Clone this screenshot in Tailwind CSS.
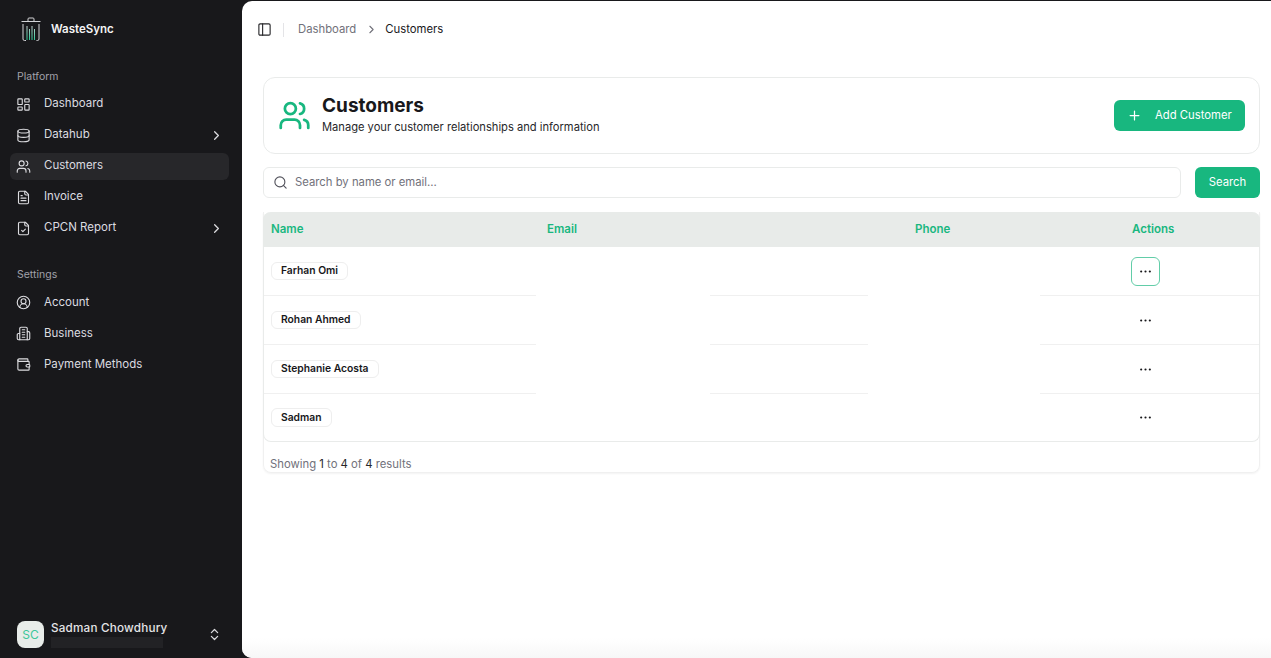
<!DOCTYPE html>
<html lang="en">
<head>
  <meta charset="UTF-8" />
  <meta name="viewport" content="width=device-width, initial-scale=1" />
  <title>WasteSync Customers</title>
  <script src="https://cdn.jsdelivr.net/npm/@tailwindcss/browser@4"></script>
</head>
<body class="bg-[#18181b] font-['Inter',sans-serif] h-[658px] w-[1271px] overflow-hidden flex">
  <!-- sidebar -->
  <aside class="w-[242px] h-full shrink-0 flex flex-col text-[#dcdce0] text-[11.5px]">
    <div class="h-[58px] pl-[21px] flex items-center gap-[10px]">
      <svg class="w-[20px] h-[25px]" viewBox="0 0 20 25" fill="none" stroke="#d4d4d8" stroke-width="1">
        <defs>
          <linearGradient id="bar" gradientUnits="userSpaceOnUse" x1="0" y1="8" x2="0" y2="24">
            <stop offset="0" stop-color="#d4d4d8" />
            <stop offset="1" stop-color="#22c58f" />
          </linearGradient>
        </defs>
        <path d="M0.5 4.500h19M7 4.500V2a1 1 0 0 1 1-1h4a1 1 0 0 1 1 1v2.500" />
        <path d="M2 7v15a1.500 1.500 0 0 0 1.500 1.500h1.500" />
        <path d="M18 7v15a1.500 1.500 0 0 1-1.500 1.500h-1" />
        <path d="M6 9v14M8.500 12v11M11 9v14M13.500 12v11" stroke="url(#bar)" stroke-width="1" />
      </svg>
      <span class="font-semibold text-[#f4f4f5] mt-px">WasteSync</span>
    </div>
    <div class="mt-[12px] pl-[17px] text-[10.500px] leading-[14px] text-[#a1a1aa]">Platform</div>
    <nav class="mt-[6.500px] ml-[10px] mr-[13px] flex flex-col gap-[4px]">
      <a class="h-[27px] pl-[6px] pr-[5px] flex items-center gap-[13px] rounded-md">
        <svg class="w-[15px] h-[15px] shrink-0" viewBox="0 0 24 24" fill="none" stroke="currentColor" stroke-width="1.800" stroke-linecap="round" stroke-linejoin="round"><rect width="7" height="9" x="3" y="3" rx="1"/><rect width="7" height="5" x="14" y="3" rx="1"/><rect width="7" height="9" x="14" y="12" rx="1"/><rect width="7" height="5" x="3" y="16" rx="1"/></svg>
        <span>Dashboard</span>
      </a>
      <a class="h-[27px] pl-[6px] pr-[5px] flex items-center gap-[13px] rounded-md">
        <svg class="w-[15px] h-[15px] shrink-0" viewBox="0 0 24 24" fill="none" stroke="currentColor" stroke-width="1.800" stroke-linecap="round" stroke-linejoin="round"><ellipse cx="12" cy="5" rx="9" ry="3"/><path d="M3 5v14a9 3 0 0 0 18 0V5"/><path d="M3 12a9 3 0 0 0 18 0"/></svg>
        <span>Datahub</span>
        <svg class="w-[15px] h-[15px] ml-auto" viewBox="0 0 24 24" fill="none" stroke="currentColor" stroke-width="2" stroke-linecap="round" stroke-linejoin="round"><path d="m9 18 6-6-6-6"/></svg>
      </a>
      <a class="h-[27px] pl-[6px] pr-[5px] flex items-center gap-[13px] rounded-md bg-[#27272a]">
        <svg class="w-[15px] h-[15px] shrink-0" viewBox="0 0 24 24" fill="none" stroke="currentColor" stroke-width="1.800" stroke-linecap="round" stroke-linejoin="round"><path d="M16 21v-2a4 4 0 0 0-4-4H6a4 4 0 0 0-4 4v2"/><circle cx="9" cy="7" r="4"/><path d="M22 21v-2a4 4 0 0 0-3-3.870"/><path d="M16 3.130a4 4 0 0 1 0 7.750"/></svg>
        <span>Customers</span>
      </a>
      <a class="h-[27px] pl-[6px] pr-[5px] flex items-center gap-[13px] rounded-md">
        <svg class="w-[15px] h-[15px] shrink-0" viewBox="0 0 24 24" fill="none" stroke="currentColor" stroke-width="1.800" stroke-linecap="round" stroke-linejoin="round"><path d="M15 2H6a2 2 0 0 0-2 2v16a2 2 0 0 0 2 2h12a2 2 0 0 0 2-2V7Z"/><path d="M14 2v4a2 2 0 0 0 2 2h4"/><path d="M10 9H8M16 13H8M16 17H8"/></svg>
        <span>Invoice</span>
      </a>
      <a class="h-[27px] pl-[6px] pr-[5px] flex items-center gap-[13px] rounded-md">
        <svg class="w-[15px] h-[15px] shrink-0" viewBox="0 0 24 24" fill="none" stroke="currentColor" stroke-width="1.800" stroke-linecap="round" stroke-linejoin="round"><path d="M15 2H6a2 2 0 0 0-2 2v16a2 2 0 0 0 2 2h12a2 2 0 0 0 2-2V7Z"/><path d="M14 2v4a2 2 0 0 0 2 2h4"/><path d="m9 15 2 2 4-4"/></svg>
        <span>CPCN Report</span>
        <svg class="w-[15px] h-[15px] ml-auto" viewBox="0 0 24 24" fill="none" stroke="currentColor" stroke-width="2" stroke-linecap="round" stroke-linejoin="round"><path d="m9 18 6-6-6-6"/></svg>
      </a>
    </nav>
    <div class="mt-[26.500px] pl-[17px] text-[10.500px] leading-[14px] text-[#a1a1aa]">Settings</div>
    <nav class="mt-[7px] ml-[10px] mr-[13px] flex flex-col gap-[4px]">
      <a class="h-[27px] pl-[6px] pr-[5px] flex items-center gap-[13px]">
        <svg class="w-[15px] h-[15px] shrink-0" viewBox="0 0 24 24" fill="none" stroke="currentColor" stroke-width="1.800" stroke-linecap="round" stroke-linejoin="round"><circle cx="12" cy="12" r="10"/><circle cx="12" cy="10" r="4"/><path d="M18 20a6 6 0 0 0-12 0"/></svg>
        <span>Account</span>
      </a>
      <a class="h-[27px] pl-[6px] pr-[5px] flex items-center gap-[13px]">
        <svg class="w-[15px] h-[15px] shrink-0" viewBox="0 0 24 24" fill="none" stroke="currentColor" stroke-width="1.800" stroke-linecap="round" stroke-linejoin="round"><path d="M6 22V4a2 2 0 0 1 2-2h8a2 2 0 0 1 2 2v18Z"/><path d="M6 12H4a2 2 0 0 0-2 2v6a2 2 0 0 0 2 2h2"/><path d="M18 9h2a2 2 0 0 1 2 2v9a2 2 0 0 1-2 2h-2"/><path d="M10 6h4M10 10h4M10 14h4M10 18h4"/></svg>
        <span>Business</span>
      </a>
      <a class="h-[27px] pl-[6px] pr-[5px] flex items-center gap-[13px]">
        <svg class="w-[15px] h-[15px] shrink-0" viewBox="0 0 24 24" fill="none" stroke="currentColor" stroke-width="1.800" stroke-linecap="round" stroke-linejoin="round"><path d="M19 7V4a1 1 0 0 0-1-1H5a2 2 0 0 0 0 4h15a1 1 0 0 1 1 1v4h-3a2 2 0 0 0 0 4h3a1 1 0 0 0 1-1v-2a1 1 0 0 0-1-1"/><path d="M3 5v14a2 2 0 0 0 2 2h15a1 1 0 0 0 1-1v-4"/></svg>
        <span>Payment Methods</span>
      </a>
    </nav>
    <div class="mt-auto mb-[10px] pl-[17px] pr-[20px] flex items-center">
      <div class="w-[27px] h-[27px] rounded-lg bg-[#e8ece9] text-[#3cc79a] text-[12px] flex items-center justify-center">SC</div>
      <div class="ml-[7px] h-[27px]">
        <div class="font-medium text-[11.700px] leading-[16px] tracking-[0.2px] text-[#e4e4e7] -mt-[1px]">Sadman Chowdhury</div>
        <div class="w-[112px] h-[11px] mt-[1px] bg-[#222225]"></div>
      </div>
      <svg class="w-[15px] h-[15px] ml-auto" viewBox="0 0 24 24" fill="none" stroke="currentColor" stroke-width="2" stroke-linecap="round" stroke-linejoin="round"><path d="m7 15 5 5 5-5"/><path d="m7 9 5-5 5 5"/></svg>
    </div>
  </aside>

  <!-- main -->
  <main class="relative flex-1 h-[657px] mt-[1px] bg-white rounded-l-[10px] overflow-hidden text-[#18181b]">
    <header class="h-[55px] pl-[15px] pt-[2px] flex items-center text-[11.300px]">
      <svg class="w-[15px] h-[15px]" viewBox="0 0 24 24" fill="none" stroke="#27272a" stroke-width="1.800" stroke-linecap="round" stroke-linejoin="round"><rect width="18" height="18" x="3" y="3" rx="2"/><path d="M9 3v18"/></svg>
      <div class="w-px h-[14px] bg-[#e4e4e7] ml-[11px] mr-[14px]"></div>
      <span class="text-[#71717a]">Dashboard</span>
      <svg class="w-[13px] h-[13px] ml-[9px] mr-[7px] text-[#71717a]" viewBox="0 0 24 24" fill="none" stroke="currentColor" stroke-width="2" stroke-linecap="round" stroke-linejoin="round"><path d="m9 18 6-6-6-6"/></svg>
      <span>Customers</span>
    </header>
    <div class="pl-[21px] pr-[11px] pt-[21px]">
      <section class="h-[77px] border border-[#e9ebea] rounded-xl pl-[14px] pr-[14px] flex items-center">
        <svg class="w-[33px] h-[33px] text-[#18b77f] shrink-0" viewBox="0 0 24 24" fill="none" stroke="currentColor" stroke-width="2" stroke-linecap="round" stroke-linejoin="round"><path d="M16 21v-2a4 4 0 0 0-4-4H6a4 4 0 0 0-4 4v2"/><circle cx="9" cy="7" r="4"/><path d="M22 21v-2a4 4 0 0 0-3-3.870"/><path d="M16 3.130a4 4 0 0 1 0 7.750"/></svg>
        <div class="ml-[11px] -mt-[2px]">
          <h1 class="text-[19px] leading-[25px] font-bold">Customers</h1>
          <p class="text-[11.150px] leading-[18px] text-[#27272a]">Manage your customer relationships and information</p>
        </div>
        <button class="ml-auto w-[131px] h-[31px] rounded-md bg-[#18b77f] text-white text-[11.300px] flex items-center pl-[13px]">
          <svg class="w-[15px] h-[15px]" viewBox="0 0 24 24" fill="none" stroke="currentColor" stroke-width="2" stroke-linecap="round" stroke-linejoin="round"><path d="M5 12h14M12 5v14"/></svg>
          <span class="ml-[13px]">Add Customer</span>
        </button>
      </section>
      <div class="mt-[13px] flex gap-[14px]">
        <div class="flex-1 h-[31px] border border-[#e9ebea] rounded-md pl-[9px] flex items-center text-[11.300px] text-[#71717a]">
          <svg class="w-[15px] h-[15px] text-[#52525b]" viewBox="0 0 24 24" fill="none" stroke="currentColor" stroke-width="1.800" stroke-linecap="round" stroke-linejoin="round"><path d="m21 21-4.340-4.340"/><circle cx="11" cy="11" r="8"/></svg>
          <span class="ml-[7px]">Search by name or email...</span>
        </div>
        <button class="w-[65px] h-[31px] rounded-md bg-[#18b77f] text-white text-[11.300px]">Search</button>
      </div>
      <div class="mt-[14px] border-x border-b border-[#f0f0f0] rounded-b-lg shadow-[0_1px_2px_rgba(0,0,0,0.05)] h-[261px]">
        <div class="h-[230px] border-x border-b border-[#e9ebea] -mx-px rounded-lg">
          <div class="h-[35px] -mx-px rounded-t-lg bg-[#e8ebe9] flex items-center text-[11.500px] font-semibold text-[#18b77f]">
            <div class="w-[284px] pl-[8px]">Name</div>
            <div class="w-[368px]">Email</div>
            <div class="w-[217px]">Phone</div>
            <div>Actions</div>
          </div>
          <div class="flex h-[49px]">
            <div class="w-[272px] border-b-[1.500px] border-[#f0f0f0] flex items-center pl-[7px]"><span class="h-[18.500px] px-[9px] flex items-center border border-[#eeeeee] rounded-md text-[10.300px] font-semibold">Farhan Omi</span></div>
            <div class="w-[174px]"></div>
            <div class="w-[158px] border-b-[1.500px] border-[#f0f0f0]"></div>
            <div class="w-[172px]"></div>
            <div class="flex-1 border-b-[1.500px] border-[#f0f0f0] flex items-center pl-[91px]">
              <button class="w-[29px] h-[29px] rounded-md border-[1.500px] border-[#62cda8] flex items-center justify-center">
                <svg class="w-[13px] h-[13px]" viewBox="0 0 24 24" fill="none" stroke="#18181b" stroke-width="4" stroke-linecap="round"><path d="M4 12h.010M12 12h.010M20 12h.010"/></svg>
              </button>
            </div>
          </div>
          <div class="flex h-[49px]">
            <div class="w-[272px] border-b-[1.500px] border-[#f0f0f0] flex items-center pl-[7px]"><span class="h-[18.500px] px-[9px] flex items-center border border-[#eeeeee] rounded-md text-[10.300px] font-semibold">Rohan Ahmed</span></div>
            <div class="w-[174px]"></div>
            <div class="w-[158px] border-b-[1.500px] border-[#f0f0f0]"></div>
            <div class="w-[172px]"></div>
            <div class="flex-1 border-b-[1.500px] border-[#f0f0f0] flex items-center pl-[91px]">
              <button class="w-[29px] h-[29px] flex items-center justify-center">
                <svg class="w-[13px] h-[13px]" viewBox="0 0 24 24" fill="none" stroke="#18181b" stroke-width="4" stroke-linecap="round"><path d="M4 12h.010M12 12h.010M20 12h.010"/></svg>
              </button>
            </div>
          </div>
          <div class="flex h-[49px]">
            <div class="w-[272px] border-b-[1.500px] border-[#f0f0f0] flex items-center pl-[7px]"><span class="h-[18.500px] px-[9px] flex items-center border border-[#eeeeee] rounded-md text-[10.300px] font-semibold">Stephanie Acosta</span></div>
            <div class="w-[174px]"></div>
            <div class="w-[158px] border-b-[1.500px] border-[#f0f0f0]"></div>
            <div class="w-[172px]"></div>
            <div class="flex-1 border-b-[1.500px] border-[#f0f0f0] flex items-center pl-[91px]">
              <button class="w-[29px] h-[29px] flex items-center justify-center">
                <svg class="w-[13px] h-[13px]" viewBox="0 0 24 24" fill="none" stroke="#18181b" stroke-width="4" stroke-linecap="round"><path d="M4 12h.010M12 12h.010M20 12h.010"/></svg>
              </button>
            </div>
          </div>
          <div class="flex h-[47px]">
            <div class="w-[272px] flex items-center pl-[7px]"><span class="h-[18.500px] px-[9px] flex items-center border border-[#eeeeee] rounded-md text-[10.300px] font-semibold">Sadman</span></div>
            <div class="w-[174px]"></div>
            <div class="w-[158px]"></div>
            <div class="w-[172px]"></div>
            <div class="flex-1 flex items-center pl-[91px]">
              <button class="w-[29px] h-[29px] flex items-center justify-center">
                <svg class="w-[13px] h-[13px]" viewBox="0 0 24 24" fill="none" stroke="#18181b" stroke-width="4" stroke-linecap="round"><path d="M4 12h.010M12 12h.010M20 12h.010"/></svg>
              </button>
            </div>
          </div>
        </div>
        <p class="pl-[6px] pt-[14px] text-[11.300px] leading-[16px] text-[#71717a]">Showing <span class="text-[#27272a]">1</span> to <span class="text-[#27272a]">4</span> of <span class="text-[#27272a]">4</span> results</p>
      </div>
    </div>
    <div class="absolute inset-x-0 bottom-0 h-[20px] bg-gradient-to-b from-white to-[#f7f7f7]"></div>
  </main>
</body>
</html>
